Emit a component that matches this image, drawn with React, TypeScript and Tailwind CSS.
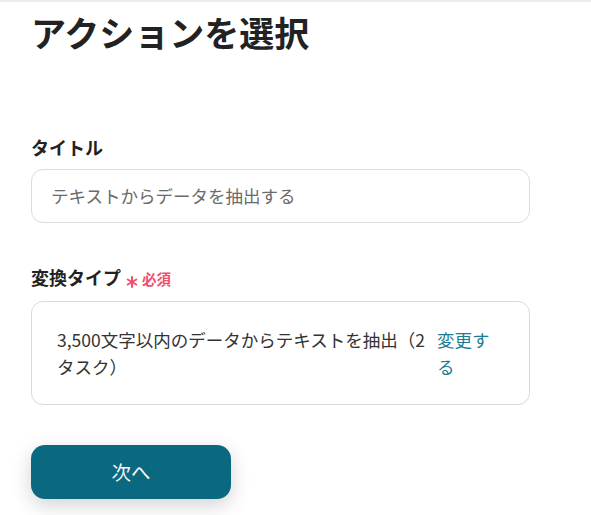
import React from "react";

export default function App() {
  return (
    <div
      className="w-[591px] h-[515px] bg-white overflow-hidden border-t-2 border-[#ebebeb]"
      style={{ fontFamily: '"Noto Sans CJK JP", "Noto Sans", sans-serif' }}
    >
      <div className="pl-[31px] pr-[61px]">
        <h1 className="text-[35px] leading-[40px] font-bold text-[#222222] pt-[10px]">
          アクションを選択
        </h1>

        <div className="mt-[83px]">
          <div className="text-[18px] leading-[24px] font-bold text-[#222222]">タイトル</div>
          <div className="mt-[10px] h-[54px] rounded-[12px] border border-[#d9dce1] flex items-center px-[19px]">
            <span className="text-[17.5px] text-[#6b6b6b]">テキストからデータを抽出する</span>
          </div>
        </div>

        <div className="mt-[42px]">
          <div className="flex items-end">
            <span className="text-[18px] leading-[24px] font-bold text-[#222222]">変換タイプ</span>
            <svg
              width="12"
              height="12"
              viewBox="0 0 12 12"
              className="ml-[5px] mr-[4px] mb-[1px]"
              stroke="#f0506e"
              strokeWidth="2"
              strokeLinecap="round"
            >
              <line x1="6" y1="1" x2="6" y2="11" />
              <line x1="1.7" y1="3.5" x2="10.3" y2="8.5" />
              <line x1="1.7" y1="8.5" x2="10.3" y2="3.5" />
            </svg>
            <span className="text-[14.5px] leading-[20px] font-bold text-[#f0506e]">必須</span>
          </div>
          <div className="mt-[12px] rounded-[12px] border border-[#d9d9d9] flex items-start py-[24px] pl-[25px] pr-[34px] gap-[10px]">
            <div className="w-[370px] text-[17.5px] leading-[27px] text-[#333333]">
              3,500文字以内のデータからテキストを抽出（2タスク）
            </div>
            <div className="w-[58px] text-[17.5px] leading-[27px] text-[#1e7b91]">変更する</div>
          </div>
        </div>

        <button className="mt-[40px] w-[200px] h-[54px] rounded-[14px] bg-[#0b6881] text-[#f4f7f8] text-[19.5px] shadow-[0_6px_20px_rgba(0,0,0,0.18)]">
          次へ
        </button>
      </div>
    </div>
  );
}
